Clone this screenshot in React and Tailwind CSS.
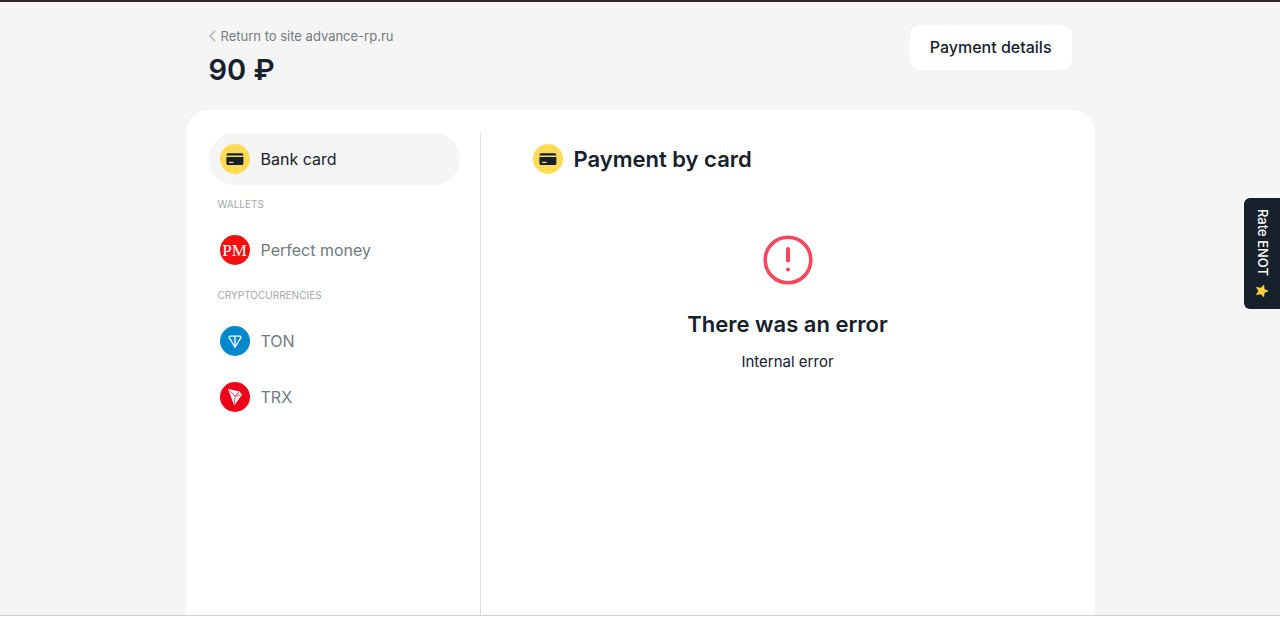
function CardIcon() {
  return (
    <svg viewBox="0 0 30 30" className="size-[30px] shrink-0" aria-hidden="true">
      <circle cx="15" cy="15" r="15" fill="#fedb54" />
      <path d="M8.3 9.2h13.2a1.9 1.9 0 0 1 1.9 2v.3H6.4v-.3a1.9 1.9 0 0 1 1.9-2z" fill="#16212c" />
      <path d="M6.4 12.9h17v6.3a1.9 1.9 0 0 1-1.9 1.9H8.3a1.9 1.9 0 0 1-1.9-1.9z" fill="#16212c" />
      <path d="M9.4 18.4h3.6" stroke="#fedb54" strokeWidth="1.1" strokeLinecap="round" />
    </svg>
  );
}

function PerfectMoneyIcon() {
  return (
    <span
      aria-hidden="true"
      className="flex size-[30px] shrink-0 items-center justify-center rounded-full bg-[#f50f10] font-['Liberation_Serif',serif] text-[17px] leading-none text-white"
    >
      PM
    </span>
  );
}

function TonIcon() {
  return (
    <svg viewBox="0 0 30 30" className="size-[30px] shrink-0" aria-hidden="true">
      <circle cx="15" cy="15" r="15" fill="#0088cc" />
      <path
        d="M10.2 10.2h9.6c1 0 1.400.9.9 1.700L15 21.200l-5.700-9.300c-.5-.8-.1-1.700.9-1.700zM15 10.200v10.500"
        fill="none"
        stroke="#fff"
        strokeWidth="1.3"
        strokeLinejoin="round"
      />
    </svg>
  );
}

function TrxIcon() {
  return (
    <svg viewBox="0 0 30 30" className="size-[30px] shrink-0" aria-hidden="true">
      <circle cx="15" cy="15" r="15" fill="#ef0019" />
      <path d="M8 7l10.900 2.300 3.300 3.200-8 11z" fill="#fff" />
      <path d="M9.500 8.600l5.700 5.700 3.600-4.300M15.200 14.300l6-1.700M15.200 14.300l-.9 7.800" fill="none" stroke="#ef0019" strokeWidth="0.7" />
    </svg>
  );
}

function Method({ icon, label, active }) {
  return (
    <button
      type="button"
      aria-pressed={Boolean(active)}
      className={
        active
          ? "flex h-[52px] w-full items-center gap-[11px] rounded-full bg-[#f5f5f5] px-[11px] text-left text-base text-[#16212c]"
          : "flex h-[52px] w-full items-center gap-[11px] rounded-full px-[11px] text-left text-base text-[#737a80]"
      }
    >
      {icon}
      {label}
    </button>
  );
}

function GroupLabel({ children }) {
  return <h2 className="flex h-[39px] items-center px-[9px] text-[10px] uppercase text-[#a2a6aa]">{children}</h2>;
}

export default function App() {
  return (
    <div className="flex min-h-screen flex-col border-t-2 border-[#2c2828] bg-[#f5f5f5] font-['Inter',sans-serif] text-[#16212c]">
      <div className="mx-auto flex w-full max-w-[909px] grow flex-col">
        <header className="flex items-start justify-between px-[23px] pt-[23px] pb-[17px]">
          <div>
            <a href="#" className="flex items-center gap-1 text-[13px] leading-[22px] text-[#737a80]">
              <svg viewBox="0 0 8 12" className="h-3 w-2" aria-hidden="true">
                <path d="M6 1L1 6l5 5" fill="none" stroke="#bfc2c5" strokeWidth="1.8" />
              </svg>
              Return to site advance-rp.ru
            </a>
            <h1 className="text-[29px] leading-[46px] font-semibold">90 ₽</h1>
          </div>
          <button type="button" className="h-[45px] rounded-[10px] bg-white px-5 pb-0.5 text-base font-medium">
            Payment details
          </button>
        </header>
        <div className="flex grow rounded-t-[23px] bg-white pt-[23px]">
          <nav aria-label="Payment methods" className="w-[295px] shrink-0 border-r border-[#dedfe0] pr-5 pl-[23px]">
            <Method icon={<CardIcon />} label="Bank card" active />
            <GroupLabel>Wallets</GroupLabel>
            <Method icon={<PerfectMoneyIcon />} label="Perfect money" />
            <GroupLabel>Cryptocurrencies</GroupLabel>
            <div className="flex flex-col gap-1">
              <Method icon={<TonIcon />} label="TON" />
              <Method icon={<TrxIcon />} label="TRX" />
            </div>
          </nav>
          <main className="grow">
            <div className="flex h-[52px] items-center gap-[11px] px-[52px]">
              <CardIcon />
              <h2 className="text-[22px] font-semibold">Payment by card</h2>
            </div>
            <div role="alert" className="flex flex-col items-center pt-[50px] text-center">
              <svg viewBox="0 0 50 50" className="size-[50px]" aria-hidden="true">
                <circle cx="25" cy="25" r="22.8" fill="none" stroke="#fb455b" strokeWidth="3.6" />
                <path d="M25 14v11.5" stroke="#fb455b" strokeWidth="4" strokeLinecap="round" />
                <circle cx="25" cy="34.5" r="2" fill="#fb455b" />
              </svg>
              <h3 className="pt-[23px] text-[22px] leading-8 font-semibold">There was an error</h3>
              <p className="pt-2.5 text-[15px] leading-6">Internal error</p>
            </div>
          </main>
        </div>
      </div>
      <div className="h-0.5 border-t border-[#cfd0cf] bg-white" />
      <button
        type="button"
        className="fixed top-[198px] right-0 flex w-9 items-center gap-2 rounded-l-md bg-[#16212c] pt-[11px] pb-[11px] text-[13px] font-medium text-white [writing-mode:vertical-rl]"
      >
        Rate ENOT
        <svg viewBox="0 0 14 14" className="size-3.5" aria-hidden="true">
          <path
            d="M13.200 7L9.300 8.700 8.800 13 5.900 9.900 1.300 10.800 3.600 7 1.300 3.200 5.900 4.100 8.800 1l.5 4.300z"
            fill="#ffd23f"
            stroke="#ffd23f"
            strokeWidth="0.5"
            strokeLinejoin="round"
          />
        </svg>
      </button>
    </div>
  );
}
